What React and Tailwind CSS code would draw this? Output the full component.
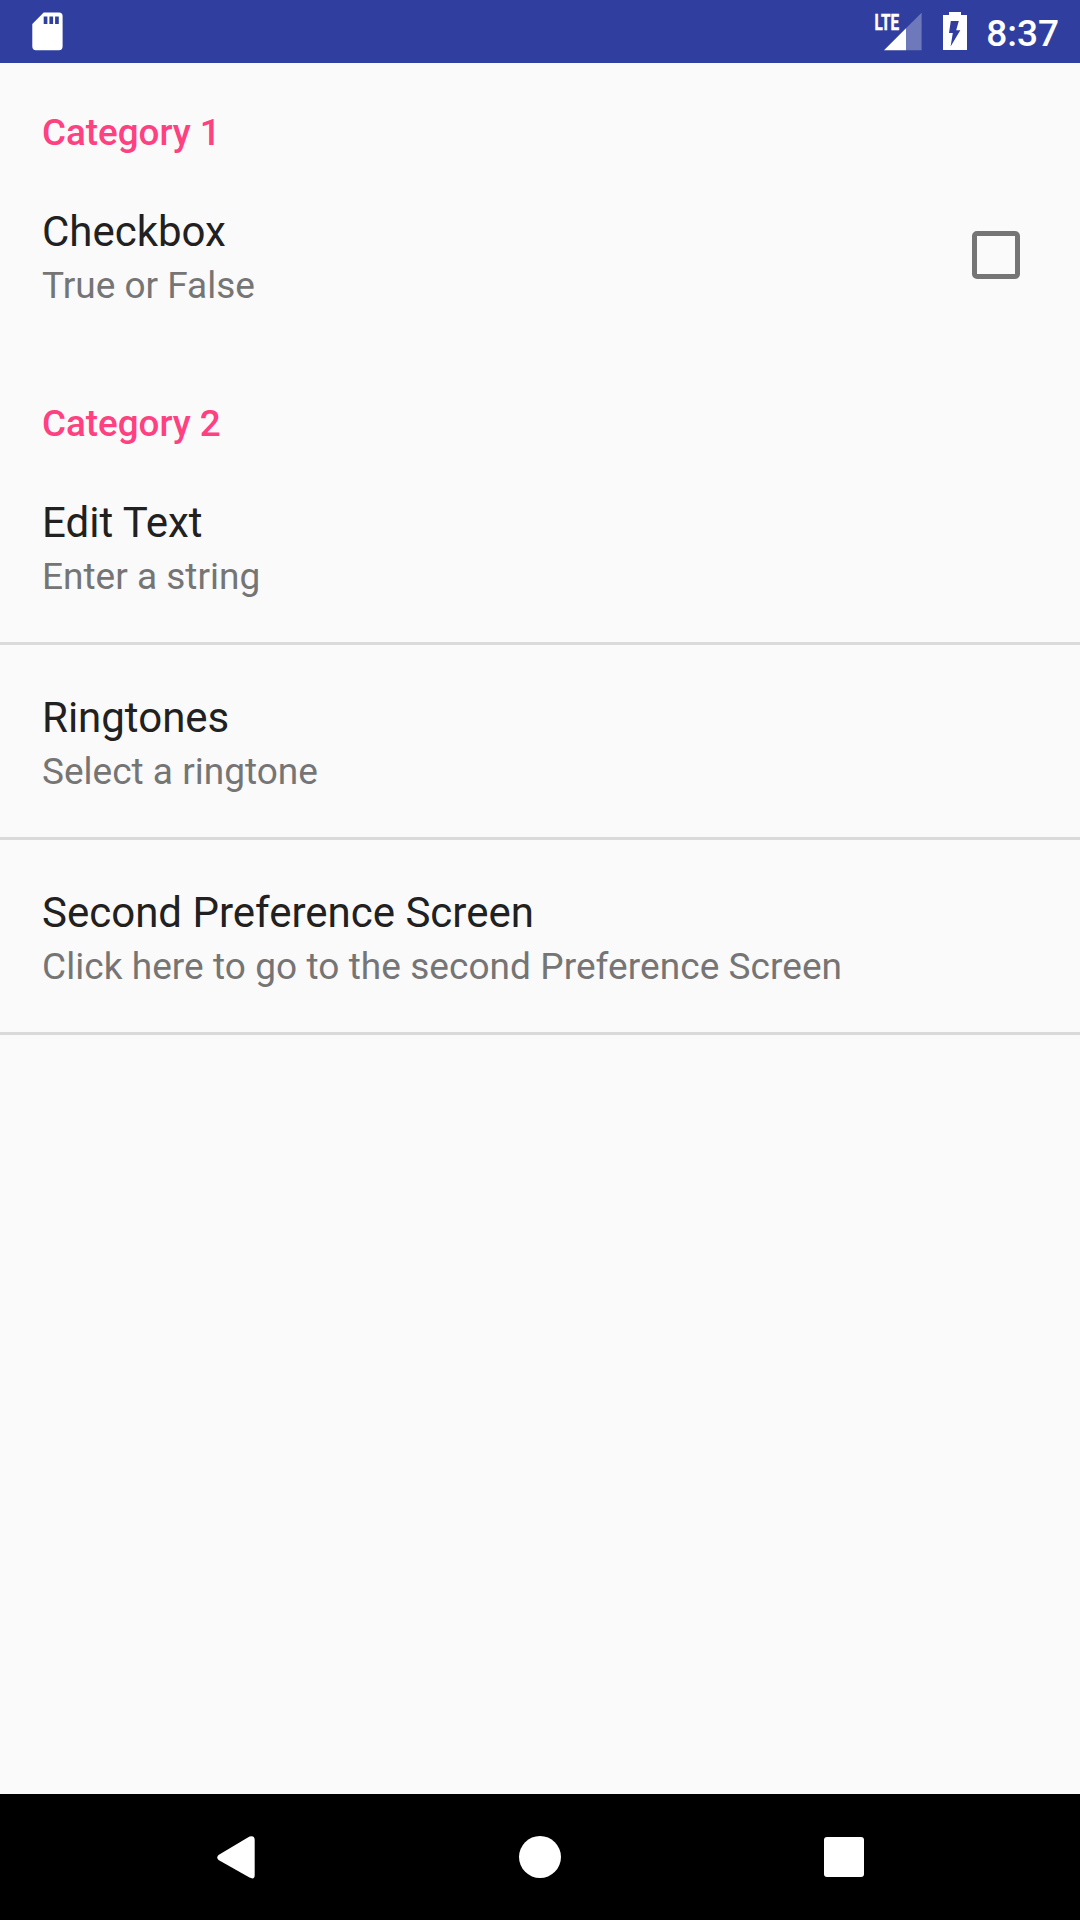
const Category = ({ children }) => (
  <div className="flex h-[96px] items-end px-[42px] pb-[2px] text-[36.75px] leading-[49px] font-medium text-[#ff4081]">{children}</div>
);

const Preference = ({ title, summary, summaryClass = "tracking-[0px]", checkbox, divider }) => (
  <div className={`flex h-[195px] items-center justify-between border-b-[3px] pl-[42px] pr-[60px] ${divider ? "border-[#dadada]" : "border-transparent"}`}>
    <div className="whitespace-nowrap pt-[4px]">
      <div className="text-[42px] leading-[56px] text-[#212121]">{title}</div>
      <div className={`text-[37px] leading-[51px] text-[#757575] ${summaryClass}`}>{summary}</div>
    </div>
    {checkbox && <div className="size-[48px] rounded-[5px] border-[5px] border-[#757575]" />}
  </div>
);

export default function App() {
  return (
    <div className="flex h-[1920px] w-[1080px] flex-col overflow-hidden bg-[#fafafa] font-['Roboto',sans-serif]">
      <header className="flex h-[63px] shrink-0 items-center justify-between bg-[#303f9f] pl-[32px] pr-[21px] text-white">
        <svg className="h-[63px] w-[31px]" viewBox="32 0 31 63" fill="currentColor">
          <path fillRule="evenodd" d="M43.7 12.5H59Q62.6 12.5 62.6 16V46.5Q62.6 50.2 59 50.2H36Q32.3 50.2 32.3 46.5V24ZM43.7 16.4V24H47.4V16.4ZM49.4 16.4V24H53.1V16.4ZM55.1 16.4V24H58.8V16.4Z" />
        </svg>
        <div className="flex items-center">
          <svg className="mr-[21px] h-[63px] w-[48px]" viewBox="874 0 48 63" fill="currentColor">
            <text transform="translate(874.5 29.6) scale(.68 1)" fontSize="22.5" fontWeight="700" stroke="currentColor" strokeWidth=".5">LTE</text>
            <path d="M884 50.3L906 28.3V50.3Z" />
            <path d="M906 28.3L921.6 12.7V50.3H906Z" opacity="0.3" />
          </svg>
          <svg className="mr-[19px] h-[63px] w-[24px]" viewBox="943 0 24 63" fill="currentColor">
            <path fillRule="evenodd" d="M949 12H961V15H967V50H943V15H949ZM950.8 21L949 33H952.8L950.6 46.5L960.3 30.3H956.2L958.8 21Z" />
          </svg>
          <span className="pt-[5px] text-[37px] leading-[44px] font-medium">8:37</span>
        </div>
      </header>
      <main className="flex-1">
        <Category>Category 1</Category>
        <Preference title="Checkbox" summary="True or False" checkbox />
        <Category>Category 2</Category>
        <Preference title="Edit Text" summary="Enter a string" divider />
        <Preference title="Ringtones" summary="Select a ringtone" divider />
        <Preference title="Second Preference Screen" summary="Click here to go to the second Preference Screen" summaryClass="tracking-[0.06px]" divider />
      </main>
      <nav className="flex h-[126px] shrink-0 items-center justify-between bg-black pl-[217px] pr-[216px] text-white">
        <svg className="h-[43px] w-[38px]" viewBox="0 0 38 43" fill="currentColor">
          <path d="M1.5 19L32.5 .6Q37.7 -1 37.7 4V39Q37.7 44 32.5 41.6L1.5 24Q-1 21.5 1.5 19Z" />
        </svg>
        <div className="size-[42px] rounded-full bg-white" />
        <div className="size-[40px] rounded-[3px] bg-white" />
      </nav>
    </div>
  );
}
